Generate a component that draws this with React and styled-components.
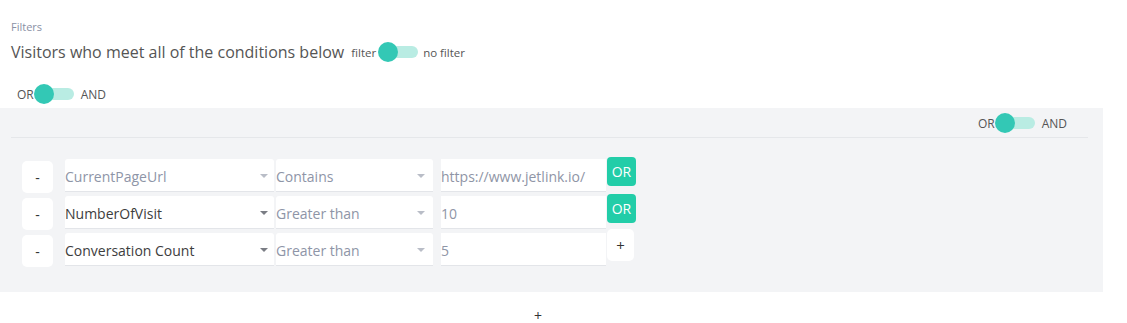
import React from "react";
import styled, { createGlobalStyle } from "styled-components";

const GlobalStyle = createGlobalStyle`
  body {
    margin: 0;
    background: #fff;
    font-family: "Open Sans", "Liberation Sans", sans-serif;
    color: #555;
  }
`;

const Page = styled.div`
  width: 1127px;
`;

const Header = styled.div`
  padding: 20px 0 0 11px;
`;

const Caption = styled.div`
  font-size: 11px;
  line-height: 14px;
  color: #8a91a5;
`;

const TitleRow = styled.div`
  display: flex;
  align-items: center;
  height: 24px;
  margin-top: 6px;
`;

const Title = styled.h2`
  margin: 0 7px 0 0;
  font-size: 16px;
  font-weight: 400;
  color: #555;
`;

const ToggleGroup = styled.div`
  display: flex;
  align-items: center;
  height: 20px;
  font-size: ${(p) => p.size || 12}px;
  color: #555;
  margin: ${(p) => p.margin || "0"};
`;

const Switch = styled.span`
  position: relative;
  display: inline-block;
  width: 40px;
  height: 20px;
  margin: 0 ${(p) => p.after || 7}px 0 ${(p) => p.gap || 0}px;
`;

const Track = styled.span`
  position: absolute;
  left: 4px;
  right: 0;
  top: 4px;
  height: 12px;
  border-radius: 6px;
  background: #b9ece3;
`;

const Knob = styled.span`
  position: absolute;
  left: 0;
  top: 0;
  width: 20px;
  height: 20px;
  border-radius: 50%;
  background: #33c8b5;
`;

const Toggle = ({ left, right, gap, after, size, margin }) => (
  <ToggleGroup size={size} margin={margin}>
    <span>{left}</span>
    <Switch gap={gap} after={after}>
      <Track />
      <Knob />
    </Switch>
    <span>{right}</span>
  </ToggleGroup>
);

const Panel = styled.section`
  width: 1103px;
  margin-top: 4px;
  background: #f3f4f6;
  padding: 5px 0 26px;
  box-sizing: border-box;
`;

const PanelHead = styled.div`
  display: flex;
  justify-content: flex-end;
  padding-right: 21px;
  padding-bottom: 4px;
  margin: 0 15px 0 11px;
  border-bottom: 1px solid #e5e7ea;
`;

const Rows = styled.div`
  display: flex;
  flex-direction: column;
  gap: 4px;
  padding: 21px 0 0 22px;
`;

const Row = styled.div`
  display: flex;
  align-items: flex-start;
  height: 33px;
`;

const MinusButton = styled.button`
  width: 31px;
  height: 32px;
  margin: 2px 12px 0 0;
  border: none;
  border-radius: 5px;
  background: #fff;
  color: #333;
  font-family: inherit;
  font-size: 14px;
  padding: 0;
`;

const Select = styled.div`
  display: flex;
  align-items: center;
  justify-content: space-between;
  width: ${(p) => p.width}px;
  height: 33px;
  margin-right: ${(p) => p.gap}px;
  box-sizing: border-box;
  background: #fff;
  border-bottom: 1px solid #e3e5e9;
  border-radius: 3px 3px 0 0;
  padding: 2px ${(p) => p.padRight || 4}px 0 0;
  font-size: 14px;
  color: ${(p) => (p.muted ? "#8e95a7" : "#3d3d3d")};
`;

const Caret = styled.span`
  width: 0;
  height: 0;
  border-left: 4px solid transparent;
  border-right: 4px solid transparent;
  border-top: 4px solid ${(p) => (p.light ? "#b9bdc7" : "#7a7d84")};
`;

const ValueInput = styled.div`
  display: flex;
  align-items: center;
  width: 165px;
  height: 33px;
  margin-right: 1px;
  padding-top: 2px;
  box-sizing: border-box;
  background: #fff;
  border-bottom: 1px solid #e3e5e9;
  font-size: 14px;
  color: #8f95a6;
`;

const OrButton = styled.button`
  width: 29px;
  height: 29px;
  margin-top: -2px;
  border: none;
  border-radius: 4px;
  background: #22cda8;
  color: #fff;
  font-family: inherit;
  font-size: 14px;
  padding: 0;
`;

const AddButton = styled.button`
  width: 27px;
  height: 32px;
  margin-top: -4px;
  border: none;
  border-radius: 5px;
  background: #fff;
  color: #333;
  font-family: inherit;
  font-size: 15px;
  padding: 0;
`;

const Footer = styled.div`
  padding: 17px 0 0 534px;
  font-size: 14px;
  line-height: 13px;
  color: #333;
`;

const conditions = [
  { field: "CurrentPageUrl", fieldMuted: true, op: "Contains", value: "https://www.jetlink.io/", action: "or" },
  { field: "NumberOfVisit", op: "Greater than", value: "10", action: "or" },
  { field: "Conversation Count", op: "Greater than", value: "5", action: "add" },
];

const App = () => (
  <Page>
    <GlobalStyle />
    <Header>
      <Caption>Filters</Caption>
      <TitleRow>
        <Title>Visitors who meet all of the conditions below</Title>
        <Toggle left="filter" right="no filter" gap={2} after={5} size={11.5} />
      </TitleRow>
      <Toggle left="OR" right="AND" margin="20px 0 0 6px" />
    </Header>
    <Panel>
      <PanelHead>
        <Toggle left="OR" right="AND" />
      </PanelHead>
      <Rows>
        {conditions.map((c) => (
          <Row key={c.field}>
            <MinusButton>-</MinusButton>
            <Select width={209} gap={2} muted={c.fieldMuted} padRight={6}>
              <span>{c.field}</span>
              <Caret light={c.fieldMuted} />
            </Select>
            <Select width={157} gap={8} muted padRight={8}>
              <span>{c.op}</span>
              <Caret light />
            </Select>
            <ValueInput>{c.value}</ValueInput>
            {c.action === "or" ? <OrButton>OR</OrButton> : <AddButton>+</AddButton>}
          </Row>
        ))}
      </Rows>
    </Panel>
    <Footer>+</Footer>
  </Page>
);

export default App;
